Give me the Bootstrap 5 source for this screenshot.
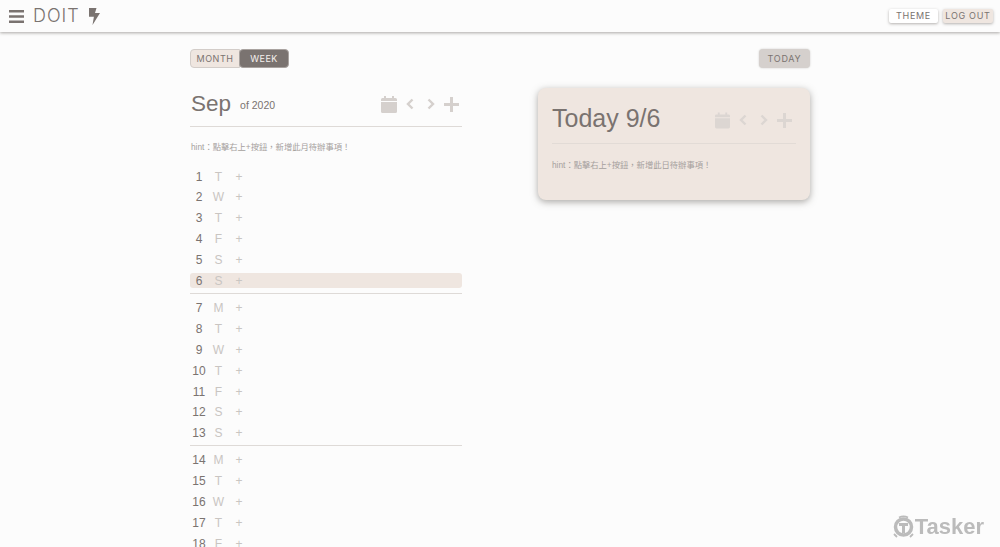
<!DOCTYPE html>
<html lang="en">
<head>
  <meta charset="UTF-8" />
  <meta name="viewport" content="width=device-width, initial-scale=1.0"/>
  <title>DOIT</title>
  <link href="https://cdn.jsdelivr.net/npm/bootstrap@5.3.0/dist/css/bootstrap.min.css" rel="stylesheet"/>
  <style>
    html, body { height: 100%; overflow: hidden; }
    body {
      background-color: #fcfcfc;
      color: #7a7370;
      font-family: "Liberation Sans", "Noto Sans CJK TC", sans-serif;
    }
    .top-bar {
      height: 32px;
      padding: 0 7px 0 9px;
      background: #fcfcfc;
      box-shadow: 0 1px 3px rgba(90, 85, 80, .5);
    }
    .brand-text { font-family: Inter, sans-serif; font-size: 18px; font-weight: 300; letter-spacing: 1px; margin: 0 8px 0 9px; line-height: 1; }
    .top-btn {
      font-family: Inter, sans-serif;
      font-size: 9px;
      font-weight: 400;
      letter-spacing: .7px;
      line-height: 14px;
      height: 14px;
      padding: 0;
      color: #7a7370;
      border: 0;
      border-radius: 2px;
      box-shadow: 0 1px 3px rgba(90, 85, 80, .45);
    }
    .btn-white { background: #fff; width: 49px; }
    .btn-beige { background: #efe6e0; width: 50px; margin-left: 5px; }
    .page-wrap { width: 620px; margin: 0 auto; padding-top: 17px; }
    .mode-btn {
      font-family: Inter, sans-serif;
      font-size: 9px;
      font-weight: 400;
      letter-spacing: .5px;
      height: 19px;
      line-height: 17px;
      padding: 0;
      border: 1px solid #d3cdc9;
      color: #7a7370;
    }
    .mode-month { width: 50px; background: #efe6e0; border-radius: 4px 0 0 4px; }
    .mode-week { width: 50px; margin-left: -1px; background: #7a7370; color: #f5f1ee; border-radius: 4px; border-color: #a9a3a0; }
    .today-btn {
      font-family: Inter, sans-serif;
      font-size: 9px;
      font-weight: 400;
      letter-spacing: .7px;
      width: 51px;
      height: 19px;
      line-height: 19px;
      padding: 0;
      border: 0;
      border-radius: 4px;
      background: #d5d0cd;
      color: #7a7370;
      box-shadow: 0 0 2px rgba(90, 85, 80, .3);
    }
    .cols { gap: 76px; }
    .col-side { width: 272px; flex: none; }
    .month-head { height: 39px; margin-top: 20px; border-bottom: 1px solid #dedad7; padding: 3px 3px 9px 1px; }
    .month-name { font-size: 22.5px; font-weight: 300; line-height: 27px; margin: 0 9px 2px 0; }
    .month-year { font-size: 10.5px; padding-bottom: 5px; }
    .tool-icons { color: #d5d0cd; }
    .gap-a { margin-left: 9px; }
    .gap-b { margin-left: 13px; }
    .hint-text { font-size: 8.3px; color: #a5a09d; line-height: 13px; }
    .month-hint { margin: 14px 0 11.6px 1px; }
    .day-row { height: 20.9px; line-height: 16px; padding: 3px 0; font-size: 12px; }
    .day-inner { height: 15px; border-radius: 3px; }
    .day-row.is-today .day-inner { background: #efe6e0; }
    .day-num { width: 18px; text-align: center; color: #7a7370; }
    .day-name { width: 21px; text-align: center; color: #c9c5c2; }
    .day-add { color: #c9c5c2; width: 12px; text-align: center; margin-left: 4px; }
    .week-rule { height: 1px; background: #dedad7; margin: 2px 0 3px; }
    .today-card {
      height: 112px;
      margin-top: 20px;
      padding: 13px 18px 14px 14px;
      background: #efe6e0;
      border-radius: 8px;
      box-shadow: 0 2px 7px rgba(90, 85, 80, .5);
    }
    .today-head { height: 43px; margin-right: -4px; padding-right: 4px; border-bottom: 1px solid #e2dbd6; padding-bottom: 8px; }
    .today-title { font-size: 25px; line-height: 30px; font-weight: 300; }
    .card-hint { margin-top: 15px; }
    .card-icons { color: #dcd6d2; padding-top: 4px; }
    .tasker-mark { position: fixed; right: 16px; bottom: 8px; color: #bbb; font-family: "Liberation Sans", sans-serif; font-weight: 700; font-size: 22px; line-height: 24px; }
  </style>
</head>
<body>
  <nav class="top-bar d-flex align-items-center justify-content-between">
    <div class="d-flex align-items-center">
      <svg width="15" height="13" viewBox="0 0 15 13"><path d="M0 0h15v2.600H0zM0 5.200h15v2.600H0zM0 10.400h15v2.600H0z" fill="#7a7370"/></svg>
      <span class="brand-text">DOIT</span>
      <svg width="12" height="17" viewBox="0 0 12 17"><path d="M1 0h7.500L7 5h5L4.500 17l1.400-8.200H1z" fill="#7a7370"/></svg>
    </div>
    <div class="d-flex">
      <button class="btn top-btn btn-white">THEME</button>
      <button class="btn top-btn btn-beige">LOG OUT</button>
    </div>
  </nav>

  <div class="page-wrap">
    <div class="d-flex justify-content-between">
      <div class="d-flex">
        <button class="btn mode-btn mode-month">MONTH</button>
        <button class="btn mode-btn mode-week">WEEK</button>
      </div>
      <button class="btn today-btn">TODAY</button>
    </div>

    <div class="d-flex cols">
      <div class="col-side">
        <div class="month-head d-flex align-items-center justify-content-between">
          <div class="d-flex align-items-end">
            <span class="month-name">Sep</span>
            <span class="month-year">of 2020</span>
          </div>
          <div class="d-flex align-items-center tool-icons">
            <svg width="16" height="17" viewBox="0 0 16 17"><path d="M3 0h2v2h6V0h2v2h1.500A1.500 1.500 0 0 1 16 3.500V5H0V3.500A1.500 1.500 0 0 1 1.500 2H3zM0 6h16v9.500a1.500 1.500 0 0 1-1.500 1.500h-13A1.500 1.500 0 0 1 0 15.500z" fill="currentColor"/></svg>
            <svg class="gap-a" width="8" height="12" viewBox="0 0 8 12"><path d="M6.500 1.500 2 6l4.500 4.500" fill="none" stroke="currentColor" stroke-width="2.400"/></svg>
            <svg class="gap-b" width="8" height="12" viewBox="0 0 8 12"><path d="M1.500 1.500 6 6l-4.500 4.500" fill="none" stroke="currentColor" stroke-width="2.400"/></svg>
            <svg class="gap-a" width="15" height="15" viewBox="0 0 15 15"><path d="M6 0h3v6h6v3H9v6H6V9H0V6h6z" fill="currentColor"/></svg>
          </div>
        </div>
        <p class="hint-text month-hint" lang="zh-TW">hint：點擊右上+按鈕，新增此月待辦事項！</p>
        <div id="day-list"></div>
      </div>

      <div class="col-side">
        <div class="today-card">
          <div class="today-head d-flex align-items-center justify-content-between">
            <span class="today-title">Today 9/6</span>
            <div class="d-flex align-items-center card-icons">
              <svg width="15" height="17" viewBox="0 0 16 17"><path d="M3 0h2v2h6V0h2v2h1.500A1.500 1.500 0 0 1 16 3.500V5H0V3.500A1.500 1.500 0 0 1 1.500 2H3zM0 6h16v9.500a1.500 1.500 0 0 1-1.500 1.500h-13A1.500 1.500 0 0 1 0 15.500z" fill="currentColor"/></svg>
              <svg class="gap-a" width="8" height="12" viewBox="0 0 8 12"><path d="M6.500 1.500 2 6l4.500 4.500" fill="none" stroke="currentColor" stroke-width="2.400"/></svg>
              <svg class="gap-b" width="8" height="12" viewBox="0 0 8 12"><path d="M1.500 1.500 6 6l-4.500 4.500" fill="none" stroke="currentColor" stroke-width="2.400"/></svg>
              <svg class="gap-a" width="15" height="15" viewBox="0 0 15 15"><path d="M6 0h3v6h6v3H9v6H6V9H0V6h6z" fill="currentColor"/></svg>
            </div>
          </div>
          <p class="hint-text card-hint mb-0" lang="zh-TW">hint：點擊右上+按鈕，新增此日待辦事項！</p>
        </div>
      </div>
    </div>
  </div>

  <div class="tasker-mark d-flex align-items-center">
    <svg width="23" height="24" viewBox="0 0 23 24"><circle cx="11.500" cy="12" r="8" fill="none" stroke="#bbb" stroke-width="3.500"/><path d="M7 8h9v3h-3v7h-3v-7H7z" fill="#bbb"/><path d="M7 2.500a10 10 0 0 1 9 0M2 19l3 3M21 19l-3 3" fill="none" stroke="#bbb" stroke-width="1.800"/></svg>
    <span>Tasker</span>
  </div>

  <script>
    // september 2020 starts on a tuesday, weeks end on sunday
    const names = ['S', 'M', 'T', 'W', 'T', 'F', 'S'];
    const list = document.getElementById('day-list');
    let html = '';
    for (let d = 1; d <= 18; d++) {
      const wd = (d + 1) % 7;
      html += `<div class="day-row${d === 6 ? ' is-today' : ''}"><div class="day-inner d-flex">` +
        `<span class="day-num">${d}</span><span class="day-name">${names[wd]}</span><span class="day-add">+</span></div></div>`;
      if (wd === 0) html += '<div class="week-rule"></div>';
    }
    list.innerHTML = html;
  </script>
  <script src="https://cdn.jsdelivr.net/npm/bootstrap@5.3.0/dist/js/bootstrap.bundle.min.js"></script>
</body>
</html>
